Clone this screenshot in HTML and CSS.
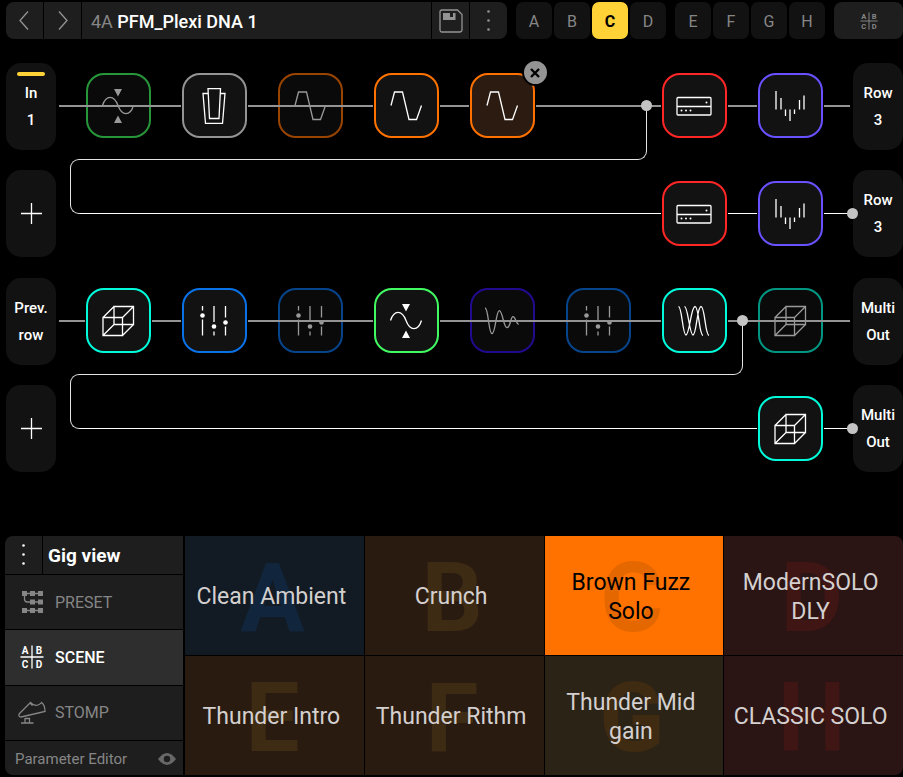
FILE: index.html
```
<!DOCTYPE html>
<html lang="en">
<head>
    <meta charset="UTF-8">
    <meta name="viewport" content="width=device-width, initial-scale=1.0">
    <title>PFM_Plexi DNA 1</title>
    <link rel="stylesheet" href="styles.css">
</head>
<body>
    <svg class="sprite" aria-hidden="true">
        <symbol id="comp" viewBox="-18 -18 36 36">
            <path d="M-15.5-.5C-12-11.300-4-11.300 0-.5S12 10.500 15.500-.5"/>
            <path class="solid" d="M-4-17h8l-4 7.500zM-4 17h8l-4-7.500z"/>
        </symbol>
        <symbol id="pedal" viewBox="-18 -18 36 36">
            <path d="M-6-17.500H6.500L5 12.500H-4.500zM-6-12.500H-11L-8.500 17.500H8.500L11-12.500H6.500"/>
        </symbol>
        <symbol id="drive" viewBox="-18 -18 36 36">
            <path d="M-15-.5L-11.500-14H-3.500L3 13.500H10.500L15.500-.5"/>
        </symbol>
        <symbol id="amp" viewBox="-18 -18 36 36">
            <rect x="-17" y="-8.500" width="34" height="17.500" rx="1"/>
            <path d="M-17 .5H17"/>
            <g class="solid">
                <circle cx="12.500" cy="-3.500" r="1"/>
                <circle cx="-12.500" cy="4.500" r="1"/>
                <circle cx="-8" cy="4.500" r="1"/>
                <circle cx="-3.500" cy="4.500" r="1"/>
            </g>
        </symbol>
        <symbol id="cab" viewBox="-18 -18 36 36">
            <path d="M-14-15V3.500M-9-8V3.500M-4.500 3.500V10M0 3.500V15M4.500 3.500V8M9.500-6V3.500M14-10.500V3.500"/>
        </symbol>
        <symbol id="cube" viewBox="-18 -18 36 36">
            <path d="M-15-3.500H4.500V14.500H-15zM-4-14.500H15.500V3.500H-4zM-15-3.500L-4-14.500M4.500-3.500L15.500-14.500M-15 14.500L-4 3.500M4.500 14.500L15.500 3.500"/>
        </symbol>
        <symbol id="eq" viewBox="-18 -18 36 36">
            <path d="M-11.500-15V-10.500M-11.500-1.500V14.500M0-15V1M0 10.500V14.500M11.500-15V-3.500M11.500 5.500V14.500"/>
            <g class="solid">
                <circle cx="-11.500" cy="-5.500" r="2.300"/>
                <circle cx="0" cy="5.500" r="2.300"/>
                <circle cx="11.500" cy="1.500" r="2.300"/>
            </g>
        </symbol>
        <symbol id="decay" viewBox="-18 -18 36 36">
            <path d="M-17-13C-13.500-13-13.500 12.700-10 12.700S-6-10.300-2.700-10.300S1.500 6.700 5 6.700S8.500-4.300 11-4.300S14 3 16.700 3.300"/>
        </symbol>
        <symbol id="chorus" viewBox="-18 -18 36 36">
            <path d="M-15.500-14.500C-12-14.500-11.500 14-8 14S-3-14.500 1-14.500S5 14 9 14.500M-9.500-14.500C-6-14.500-4.500 14-1 14S3-14.500 7-14.500S11 14 15 14.500"/>
        </symbol>
        <symbol id="scene" viewBox="0 0 24 24">
            <path d="M12 .5V23.500M.5 12H23.500"/>
            <g class="letters">
                <text x="5" y="9">A</text>
                <text x="19" y="9">B</text>
                <text x="5" y="22.500">C</text>
                <text x="19" y="22.500">D</text>
            </g>
        </symbol>
        <symbol id="dots" viewBox="0 0 24 24">
            <g class="solid">
                <circle cx="11.500" cy="2.500" r="1.300"/>
                <circle cx="11.500" cy="11.500" r="1.300"/>
                <circle cx="11.500" cy="20.500" r="1.300"/>
            </g>
        </symbol>
    </svg>

    <header class="topbar">
        <div class="preset-bar">
            <button class="key" aria-label="Previous preset"><svg class="icon" viewBox="0 0 24 24"><path d="M15 2.500L7 11.500L15 20.500"/></svg></button>
            <button class="key" aria-label="Next preset"><svg class="icon" viewBox="0 0 24 24"><path d="M8 2.500L16 11.500L8 20.500"/></svg></button>
            <h1 class="preset-name"><span class="slot-id">4A</span> PFM_Plexi DNA 1</h1>
            <button class="key" aria-label="Save"><svg class="icon" viewBox="0 0 24 24"><path d="M3 1H18.500L23 5.500V20.500Q23 23 20.500 23H3Q1 23 1 20.500V3Q1 1 3 1z"/><path class="solid" d="M4 4H11V8H14V4H16.500V11H4z"/></svg></button>
            <button class="key" aria-label="Preset menu"><svg class="icon"><use href="#dots"/></svg></button>
        </div>
        <nav class="scene-keys">
            <button>A</button>
            <button>B</button>
            <button class="current">C</button>
            <button>D</button>
        </nav>
        <nav class="scene-keys">
            <button>E</button>
            <button>F</button>
            <button>G</button>
            <button>H</button>
        </nav>
        <button class="mode" aria-label="Scene mode"><svg class="icon-small"><use href="#scene"/></svg></button>
    </header>

    <main class="grid">
        <section class="pair">
            <div class="lane">
                <button class="port input"><span>In</span><span>1</span></button>
                <div class="slots">
                    <button class="block green bypassed" aria-label="Compressor"><svg><use href="#comp"/></svg></button>
                    <button class="block gray" aria-label="Pedal"><svg><use href="#pedal"/></svg></button>
                    <button class="block orange bypassed" aria-label="Drive"><svg><use href="#drive"/></svg></button>
                    <button class="block orange" aria-label="Drive"><svg><use href="#drive"/></svg></button>
                    <div class="holder">
                        <button class="block orange selected" aria-label="Drive"><svg><use href="#drive"/></svg></button>
                        <button class="remove" aria-label="Remove block"><svg viewBox="0 0 10 10"><path d="M1 1L9 9M9 1L1 9"/></svg></button>
                    </div>
                    <button class="block red col-7" aria-label="Amp"><svg><use href="#amp"/></svg></button>
                    <button class="block violet" aria-label="Cab"><svg><use href="#cab"/></svg></button>
                    <i class="drop after-6"></i>
                </div>
                <button class="port"><span>Row</span><span>3</span></button>
            </div>
            <div class="lane branch">
                <button class="port" aria-label="Add input"><svg class="icon"><path d="M12.500 1V22M2 11.500H23"/></svg></button>
                <div class="slots">
                    <button class="block red col-7" aria-label="Amp"><svg><use href="#amp"/></svg></button>
                    <button class="block violet" aria-label="Cab"><svg><use href="#cab"/></svg></button>
                </div>
                <button class="port"><span>Row</span><span>3</span></button>
            </div>
        </section>

        <section class="pair">
            <div class="lane">
                <button class="port"><span>Prev.</span><span>row</span></button>
                <div class="slots">
                    <button class="block cyan" aria-label="Reverb"><svg><use href="#cube"/></svg></button>
                    <button class="block blue" aria-label="EQ"><svg><use href="#eq"/></svg></button>
                    <button class="block blue bypassed" aria-label="EQ"><svg><use href="#eq"/></svg></button>
                    <button class="block lime" aria-label="Compressor"><svg><use href="#comp"/></svg></button>
                    <button class="block indigo bypassed" aria-label="Delay"><svg><use href="#decay"/></svg></button>
                    <button class="block blue bypassed" aria-label="EQ"><svg><use href="#eq"/></svg></button>
                    <button class="block cyan" aria-label="Modulation"><svg><use href="#chorus"/></svg></button>
                    <button class="block cyan bypassed" aria-label="Reverb"><svg><use href="#cube"/></svg></button>
                    <i class="drop after-7"></i>
                </div>
                <button class="port"><span>Multi</span><span>Out</span></button>
            </div>
            <div class="lane branch">
                <button class="port" aria-label="Add input"><svg class="icon"><path d="M12.500 1V22M2 11.500H23"/></svg></button>
                <div class="slots">
                    <button class="block cyan col-8" aria-label="Reverb"><svg><use href="#cube"/></svg></button>
                </div>
                <button class="port"><span>Multi</span><span>Out</span></button>
            </div>
        </section>
    </main>

    <footer class="gig">
        <aside class="menu">
            <div class="menu-head">
                <button aria-label="Gig view menu"><svg class="icon"><use href="#dots"/></svg></button>
                <h2>Gig view</h2>
            </div>
            <button class="menu-item">
                <svg class="icon" viewBox="0 0 24 24"><g class="solid"><path d="M2 1H7V6H2zM10 1H15V6H10zM18 1H23V6H18zM10 9.500H15V14.500H10zM18 9.500H23V14.500H18zM2 18H7V23H2zM10 18H15V23H10zM18 18H23V23H18z"/></g><path d="M5 3.500H19M4.500 5V9Q4.500 12 7.500 12H19M5 20.500H19"/></svg>
                PRESET
            </button>
            <button class="menu-item current">
                <svg class="icon"><use href="#scene"/></svg>
                SCENE
            </button>
            <button class="menu-item">
                <svg class="icon wide" viewBox="0 0 28 24"><path d="M1 15Q.5 13.500 2 12L12.500 1.500Q16 5.500 20 4Q22.500 3 23.500 1.500Q27 4 27 10.500L3 16Q1.500 16 1 15zM12 2L14.500 4.500M7 17V21.500M7 17.500H11.500V21.500M3 22H15.500"/></svg>
                STOMP
            </button>
            <button class="menu-foot">
                Parameter Editor
                <svg class="eye" viewBox="0 0 18 12"><path d="M0 6Q9-6 18 6Q9 18 0 6z"/><circle cx="9" cy="6" r="3.200"/></svg>
            </button>
        </aside>
        <div class="tiles">
            <button class="tile navy" data-key="A"><span>Clean Ambient</span></button>
            <button class="tile brown" data-key="B"><span>Crunch</span></button>
            <button class="tile active" data-key="C"><span>Brown Fuzz Solo</span></button>
            <button class="tile maroon" data-key="D"><span>ModernSOLO DLY</span></button>
            <button class="tile brown" data-key="E"><span>Thunder Intro</span></button>
            <button class="tile brown" data-key="F"><span>Thunder Rithm</span></button>
            <button class="tile olive" data-key="G"><span>Thunder Mid gain</span></button>
            <button class="tile maroon" data-key="H"><span>CLASSIC SOLO</span></button>
        </div>
    </footer>
</body>
</html>
```
FILE: styles.css
```
*, *::before, *::after {
    box-sizing: border-box;
}
body {
    margin: 0;
    min-height: 100vh;
    padding: 2px 0 2px 6px;
    display: flex;
    flex-direction: column;
    background-color: #000;
    color: #fff;
    font-family: Roboto, "Liberation Sans", sans-serif;
}
button {
    margin: 0;
    padding: 0;
    border: none;
    background: none;
    color: inherit;
    font: inherit;
    cursor: pointer;
}
h1, h2 {
    margin: 0;
}
svg {
    display: block;
    fill: none;
    stroke: currentColor;
    stroke-width: 1.3px;
}
.sprite {
    display: none;
}
.solid {
    fill: currentColor;
    stroke: none;
}
.letters {
    fill: currentColor;
    stroke: none;
    font-size: 10px;
    font-weight: 700;
    text-anchor: middle;
}
.icon {
    width: 24px;
    height: 24px;
    flex: none;
}
.icon-small {
    width: 18px;
    height: 18px;
}

/* top bar */
.topbar {
    display: flex;
    gap: 9px;
    height: 37px;
}
.preset-bar {
    flex: 1;
    display: flex;
    gap: 1px;
    border-radius: 8px;
    overflow: hidden;
}
.key {
    width: 37px;
    display: flex;
    align-items: center;
    justify-content: center;
    background-color: #1e1e1e;
    color: #949494;
}
.preset-name {
    flex: 1;
    padding-left: 9px;
    background-color: #1e1e1e;
    font-size: 18px;
    font-weight: 500;
    line-height: 39px;
}
.slot-id {
    color: #868686;
    font-weight: 400;
}
.scene-keys {
    display: flex;
    gap: 2px;
}
.scene-keys button {
    width: 36px;
    padding-top: 1px;
    border-radius: 7px;
    background-color: #121212;
    color: #868686;
    font-size: 16px;
}
.scene-keys .current {
    background-color: #ffd338;
    color: #000;
    font-weight: 700;
}
.mode {
    width: 69px;
    display: flex;
    align-items: center;
    justify-content: center;
    border-radius: 8px;
    background-color: #1e1e1e;
    color: #868686;
}

/* signal grid */
.grid {
    padding-top: 24px;
    display: flex;
    flex-direction: column;
    gap: 21px;
}
.pair {
    display: flex;
    flex-direction: column;
    gap: 20px;
}
.lane {
    display: grid;
    grid-template-columns: 50px 1fr 50px;
    height: 87px;
}
.port {
    position: relative;
    display: flex;
    flex-direction: column;
    align-items: center;
    justify-content: center;
    gap: 9px;
    border-radius: 15px;
    background-color: #121212;
    font-size: 15px;
    font-weight: 500;
    line-height: 18px;
}
.input::before {
    content: "";
    position: absolute;
    top: 9px;
    left: 11px;
    right: 11px;
    height: 4px;
    border-radius: 2px;
    background-color: #ffd338;
}
.slots {
    position: relative;
    margin: 0 15px 0 14px;
    padding-top: 10px;
    display: grid;
    grid-template-columns: repeat(8, 1fr);
    align-items: start;
    justify-items: center;
}
.slots::before {
    content: "";
    position: absolute;
    z-index: 1;
    left: -11px;
    right: -12px;
    top: 42px;
    height: 2px;
    background-color: #949494;
}
.block {
    width: 65px;
    height: 65px;
    display: flex;
    align-items: center;
    justify-content: center;
    border: 2px solid;
    border-radius: 18px;
    background-color: #121212;
    position: relative;
    z-index: 2;
    box-shadow: 0 0 0 1px #000;
}
.block svg {
    width: 36px;
    height: 36px;
    color: #fff;
}
.bypassed {
    z-index: 0;
    opacity: 0.6;
}
.green, .lime { border-color: #41fa62; }
.gray { border-color: #949494; }
.orange { border-color: #ff7200; }
.red { border-color: #ff2626; }
.violet { border-color: #6851ff; }
.cyan { border-color: #00fbda; }
.blue { border-color: #0a72e8; }
.indigo { border-color: #3a11ee; }
.selected {
    background-color: #2b1b11;
}
.col-7 { grid-column: 7; }
.col-8 { grid-column: 8; }
.holder {
    position: relative;
}
.remove {
    position: absolute;
    z-index: 3;
    top: -14px;
    right: -14px;
    width: 27px;
    height: 27px;
    display: flex;
    align-items: center;
    justify-content: center;
    border: 2px solid #000;
    border-radius: 50%;
    background-color: #949494;
    color: #000;
}
.remove svg {
    width: 10px;
    height: 10px;
    stroke-width: 2.4px;
}

/* wire that leaves a lane and turns into the branch below it */
.drop {
    position: absolute;
    z-index: 1;
    left: 10px;
    top: 43px;
    height: 54px;
    border: solid #e4e4e4;
    border-width: 0 1px 1px 0;
    border-radius: 0 0 9px 0;
}
.after-6 { right: calc(25% - 1px); }
.after-7 { right: calc(12.5% - 1px); }
.drop::before,
.branch .slots::after {
    content: "";
    position: absolute;
    width: 11px;
    height: 11px;
    border-radius: 50%;
    background-color: #c4c4c4;
}
.drop::before {
    top: -6px;
    right: -6px;
}
.drop::after {
    content: "";
    position: absolute;
    left: -10px;
    top: 100%;
    width: 10px;
    height: 55px;
    border: solid #e4e4e4;
    border-width: 1px 0 1px 1px;
    border-radius: 9px 0 0 9px;
}
.branch .slots {
    padding-top: 11px;
}
.branch .slots::before {
    left: 10px;
    right: -15px;
    top: 43px;
    height: 1px;
    background-color: #fff;
}
.branch .slots::after {
    z-index: 1;
    top: 38px;
    right: -20px;
}

/* gig view */
.gig {
    margin: auto 0 0 -1px;
    display: flex;
    gap: 2px;
    height: 239px;
    border-radius: 8px;
    overflow: hidden;
}
.menu {
    width: 178px;
    display: grid;
    grid-template-rows: 38px 1fr 1fr 1fr 34px;
    gap: 1px;
    color: #868686;
}
.menu-head {
    display: flex;
    gap: 1px;
    color: #fff;
}
.menu-head button {
    width: 37px;
    display: flex;
    align-items: center;
    justify-content: center;
    background-color: #1e1e1e;
}
.menu-head h2 {
    flex: 1;
    padding-left: 5px;
    background-color: #1e1e1e;
    font-size: 19px;
    font-weight: 700;
    line-height: 39px;
}
.menu-item {
    padding-left: 15px;
    display: flex;
    align-items: center;
    gap: 11px;
    background-color: #1e1e1e;
    font-size: 16px;
}
.menu-item .wide {
    width: 28px;
    margin: 0 -2px;
}
.menu-item.current {
    background-color: #2e2e2e;
    color: #fff;
    font-weight: 500;
}
.menu-foot {
    padding: 3px 7px 0 10px;
    display: flex;
    align-items: center;
    justify-content: space-between;
    background-color: #1e1e1e;
    font-size: 15px;
}
.eye {
    width: 18px;
    height: 12px;
    fill: #686868;
    stroke: none;
}
.eye circle {
    fill: #1e1e1e;
}
.tiles {
    flex: 1;
    display: grid;
    grid-template-columns: repeat(4, 1fr);
    grid-template-rows: 1fr 1fr;
    gap: 1px;
}
.tile {
    position: relative;
    padding: 2px 12px 0 6px;
    color: #d4d0cf;
    font-size: 23px;
    line-height: 29px;
}
.tile span {
    position: relative;
}
.tile::before {
    content: attr(data-key);
    position: absolute;
    inset: 0;
    padding: 6px 4px 0 0;
    display: flex;
    align-items: center;
    justify-content: center;
    font-size: 96px;
    font-weight: 700;
}
.navy { background-color: #121b24; }
.navy::before { color: #11263c; }
.brown { background-color: #2a1b11; }
.brown::before { color: #3e2b13; }
.maroon { background-color: #2a1514; }
.maroon::before { color: #401615; }
.olive { background-color: #2b2416; }
.olive::before { color: #3f2a12; }
.active {
    background-color: #ff7200;
    color: #000;
}
.active::before {
    color: #e56700;
}
```
